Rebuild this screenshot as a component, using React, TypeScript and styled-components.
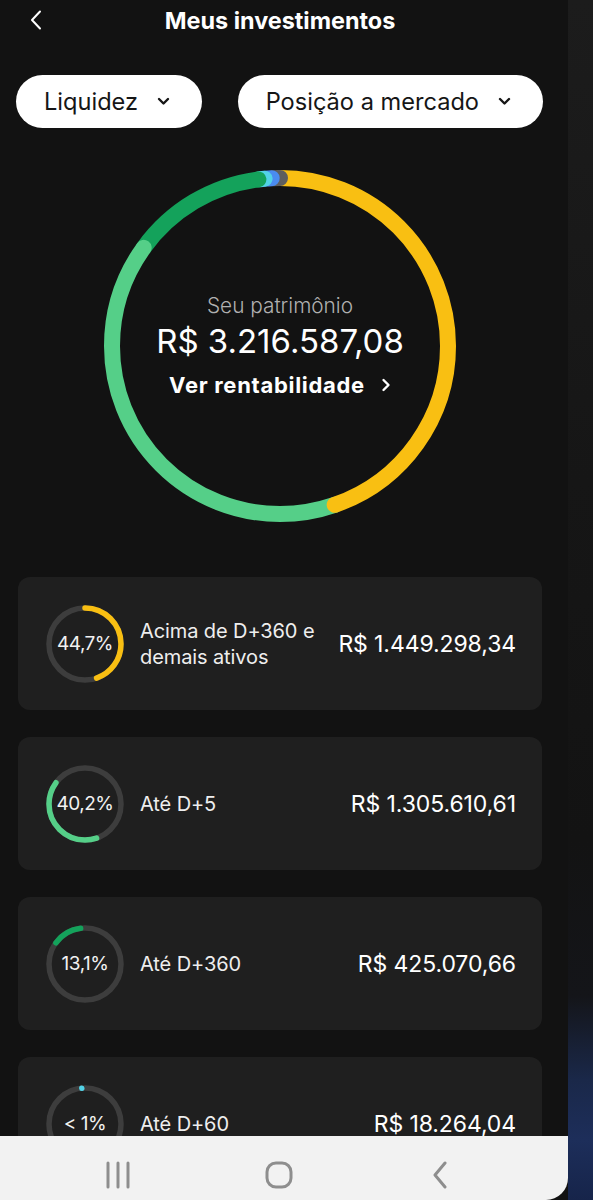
import React from "react";
import styled, { createGlobalStyle } from "styled-components";

const GlobalStyle = createGlobalStyle`
  html, body { margin: 0; padding: 0; background: #121212; }
  body { font-family: Inter, "Noto Sans", "Liberation Sans", sans-serif; -webkit-font-smoothing: antialiased; }
  * { box-sizing: border-box; }
`;

const Screen = styled.div`
  display: flex;
  width: 593px;
  height: 1200px;
  overflow: hidden;
`;

const Phone = styled.div`
  width: 568px;
  height: 1200px;
  flex-shrink: 0;
  display: flex;
  flex-direction: column;
  background: #121212;
  border-bottom-right-radius: 22px;
  overflow: hidden;
`;

const SideStrip = styled.div`
  flex: 1;
  background: linear-gradient(
    to bottom,
    #1c1c1c 0%,
    #161616 40%,
    #131313 70%,
    #141519 83%,
    #1a2849 90%,
    #1d2e5a 95%,
    #16244a 100%
  );
`;

const Content = styled.main`
  width: 560px;
  flex: 1;
  min-height: 0;
  overflow: hidden;
  display: flex;
  flex-direction: column;
  > * { flex-shrink: 0; }
`;

const Header = styled.header`
  height: 40px;
  display: grid;
  grid-template-columns: 60px 1fr 60px;
  align-items: center;
`;

const BackButton = styled.div`
  padding-left: 29px;
  display: flex;
  align-items: center;
`;

const Title = styled.h1`
  margin: 0;
  text-align: center;
  color: #ffffff;
  font-size: 23.4px;
  font-weight: 700;
  letter-spacing: 0;
`;

const PillRow = styled.div`
  margin-top: 35px;
  padding: 0 17px 0 16px;
  display: flex;
  justify-content: space-between;
`;

const Pill = styled.button`
  height: 53px;
  border: none;
  border-radius: 27px;
  background: #ffffff;
  padding: 0 32px 0 28px;
  display: flex;
  align-items: center;
  gap: 19px;
  font-family: inherit;
  font-size: 23.6px;
  font-weight: 400;
  color: #161616;
  letter-spacing: 0;
`;

const DonutArea = styled.section`
  margin-top: 38px;
  height: 360px;
  display: grid;
  justify-content: center;
  align-items: center;
  > * { grid-area: 1 / 1; }
`;

const CenterText = styled.div`
  display: flex;
  flex-direction: column;
  align-items: center;
  justify-self: center;
`;

const SubLabel = styled.div`
  color: #b0b0b0;
  font-size: 20.8px;
  line-height: 24px;
  font-weight: 300;
`;

const Amount = styled.div`
  margin-top: 3px;
  color: #ffffff;
  font-size: 33px;
  line-height: 40px;
  font-weight: 400;
`;

const LinkRow = styled.div`
  margin-top: 11px;
  display: flex;
  align-items: center;
  gap: 16px;
  color: #ffffff;
  font-size: 22px;
  line-height: 26px;
  font-weight: 700;
  letter-spacing: 0.7px;
`;

const CardList = styled.section`
  margin-top: 51px;
  padding: 0 18px;
  display: flex;
  flex-direction: column;
  gap: 27px;
`;

const Card = styled.div`
  height: 133px;
  flex-shrink: 0;
  background: #1f1f1f;
  border-radius: 12px;
  display: flex;
  align-items: center;
  padding: 0 26px 0 28px;
  gap: 16px;
`;

const MiniRingBox = styled.div`
  width: 78px;
  height: 78px;
  flex-shrink: 0;
  display: grid;
  align-items: center;
  justify-items: center;
  > * { grid-area: 1 / 1; }
`;

const Percent = styled.span`
  color: #f2f2f2;
  font-size: 19px;
  letter-spacing: -0.5px;
`;

const CardLabel = styled.div`
  flex: 1;
  color: #eeeeee;
  font-size: 20px;
  line-height: 26px;
  letter-spacing: -0.1px;
`;

const CardValue = styled.div`
  color: #ffffff;
  font-size: 23px;
  letter-spacing: -0.1px;
  white-space: nowrap;
`;

const NavBar = styled.nav`
  height: 64px;
  flex-shrink: 0;
  background: #f2f2f2;
  display: flex;
  justify-content: center;
  align-items: center;
  gap: 121px;
  padding: 14px 10px 0 0;
`;

const NavSlot = styled.div`
  width: 40px;
  display: flex;
  justify-content: center;
  align-items: center;
`;

const COLORS = {
  yellow: "#f9bf12",
  light: "#55cf88",
  dark: "#14a25b",
  cyan: "#52d2e6",
  blue: "#4a8cf0",
  gray: "#5e5e5e",
  track: "#3d3d3d",
};

type Seg = { start: number; end: number; color: string };

const segYellow: Seg = { start: 0, end: 44.7, color: COLORS.yellow };
const segLight: Seg = { start: 44.7, end: 84.9, color: COLORS.light };
const segDark: Seg = { start: 84.9, end: 97.9, color: COLORS.dark };
const segCyan: Seg = { start: 98.05, end: 98.5, color: COLORS.cyan };
const segBlue: Seg = { start: 98.6, end: 99.17, color: COLORS.blue };
const segGray: Seg = { start: 99.3, end: 100, color: COLORS.gray };

// drawing order: each segment's end cap lies over the next one
const drawOrder: Seg[] = [
  segDark,
  segLight,
  segYellow,
  segGray,
  segBlue,
  segCyan,
  { start: 97.9, end: 97.9, color: COLORS.dark },
];

function Arc({ r, cx, sw, seg }: { r: number; cx: number; sw: number; seg: Seg }) {
  const c = 2 * Math.PI * r;
  const len = Math.max(((seg.end - seg.start) / 100) * c, 0.01);
  return (
    <circle
      cx={cx}
      cy={cx}
      r={r}
      fill="none"
      stroke={seg.color}
      strokeWidth={sw}
      strokeLinecap="round"
      strokeDasharray={`${len} ${c}`}
      strokeDashoffset={-(seg.start / 100) * c}
      transform={`rotate(-90 ${cx} ${cx})`}
    />
  );
}

function BigDonut() {
  const size = 360;
  const cx = size / 2;
  return (
    <svg width={size} height={size} viewBox={`0 0 ${size} ${size}`}>
      {drawOrder.map((s, i) => (
        <Arc key={i} r={168} cx={cx} sw={16} seg={s} />
      ))}
    </svg>
  );
}

function MiniRing({ seg }: { seg: Seg }) {
  return (
    <svg width={78} height={78} viewBox="0 0 78 78">
      <circle cx={39} cy={39} r={36} fill="none" stroke={COLORS.track} strokeWidth={5.5} />
      <Arc r={36} cx={39} sw={5.5} seg={seg} />
    </svg>
  );
}

function ChevronDown() {
  return (
    <svg width="13" height="9" viewBox="0 0 13 9">
      <path d="M2 2 L6.5 6.5 L11 2" fill="none" stroke="#161616" strokeWidth="2.4" strokeLinecap="round" strokeLinejoin="round" />
    </svg>
  );
}

const rows = [
  { pct: "44,7%", label: ["Acima de D+360 e", "demais ativos"], value: "R$ 1.449.298,34", seg: segYellow },
  { pct: "40,2%", label: ["Até D+5"], value: "R$ 1.305.610,61", seg: segLight },
  { pct: "13,1%", label: ["Até D+360"], value: "R$ 425.070,66", seg: segDark },
  { pct: "< 1%", label: ["Até D+60"], value: "R$ 18.264,04", seg: { start: 98.4, end: 98.4, color: COLORS.cyan } },
];

export default function App() {
  return (
    <>
      <GlobalStyle />
      <Screen>
        <Phone>
          <Content>
            <Header>
              <BackButton>
                <svg width="14" height="20" viewBox="0 0 14 20">
                  <path d="M11 1.5 L3 10 L11 18.5" fill="none" stroke="#ffffff" strokeWidth="2" strokeLinecap="round" strokeLinejoin="round" />
                </svg>
              </BackButton>
              <Title>Meus investimentos</Title>
              <div />
            </Header>

            <PillRow>
              <Pill>
                Liquidez
                <ChevronDown />
              </Pill>
              <Pill>
                Posição a mercado
                <ChevronDown />
              </Pill>
            </PillRow>

            <DonutArea>
              <BigDonut />
              <CenterText>
                <SubLabel>Seu patrimônio</SubLabel>
                <Amount>R$ 3.216.587,08</Amount>
                <LinkRow>
                  Ver rentabilidade
                  <svg width="10" height="14" viewBox="0 0 10 14">
                    <path d="M2.5 2 L7.5 7 L2.5 12" fill="none" stroke="#ffffff" strokeWidth="2.4" strokeLinecap="round" strokeLinejoin="round" />
                  </svg>
                </LinkRow>
              </CenterText>
            </DonutArea>

            <CardList>
              {rows.map((r, i) => (
                <Card key={i}>
                  <MiniRingBox>
                    <MiniRing seg={r.seg} />
                    <Percent>{r.pct}</Percent>
                  </MiniRingBox>
                  <CardLabel>
                    {r.label.map((l, j) => (
                      <div key={j}>{l}</div>
                    ))}
                  </CardLabel>
                  <CardValue>{r.value}</CardValue>
                </Card>
              ))}
            </CardList>
          </Content>

          <NavBar>
            <NavSlot>
              <svg width="26" height="28" viewBox="0 0 26 28">
                <path d="M3 2 V26 M13 2 V26 M23 2 V26" stroke="#8e8e8e" strokeWidth="3" strokeLinecap="round" />
              </svg>
            </NavSlot>
            <NavSlot>
              <svg width="28" height="28" viewBox="0 0 28 28">
                <rect x="2" y="2" width="24" height="24" rx="9" fill="none" stroke="#8e8e8e" strokeWidth="3" />
              </svg>
            </NavSlot>
            <NavSlot>
              <svg width="16" height="28" viewBox="0 0 16 28">
                <path d="M13 2 L3 14 L13 26" fill="none" stroke="#8e8e8e" strokeWidth="3" strokeLinecap="round" strokeLinejoin="round" />
              </svg>
            </NavSlot>
          </NavBar>
        </Phone>
        <SideStrip />
      </Screen>
    </>
  );
}
